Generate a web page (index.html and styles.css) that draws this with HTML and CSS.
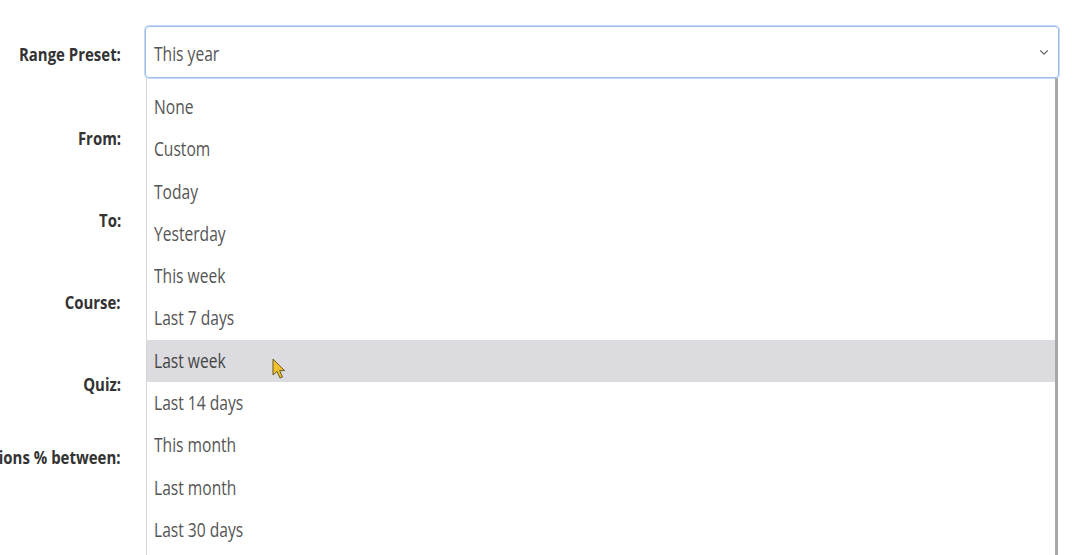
FILE: index.html
```html
<!DOCTYPE html>
<html>
<head>
<meta charset="utf-8">
<link rel="stylesheet" href="styles.css">
</head>
<body>
<div class="form">
  <div class="labels">
    <div class="label l-range"><span class="lt">Range Preset:</span></div>
    <div class="label l-from"><span class="lt">From:</span></div>
    <div class="label"><span class="lt">To:</span></div>
    <div class="label"><span class="lt">Course:</span></div>
    <div class="label"><span class="lt">Quiz:</span></div>
    <div class="label l-last"><span class="lt">Correct questions % between:</span></div>
  </div>
  <div class="field">
    <div class="select">
      <span class="t value">This year</span>
      <svg class="chev" width="10" height="7" viewBox="0 0 10 7"><path d="M1.2 1.4 L5 5.2 L8.8 1.4" fill="none" stroke="#666" stroke-width="1.3"/></svg>
    </div>
    <div class="menu">
      <div class="opt"><span class="t">None</span></div>
      <div class="opt"><span class="t">Custom</span></div>
      <div class="opt"><span class="t">Today</span></div>
      <div class="opt"><span class="t">Yesterday</span></div>
      <div class="opt"><span class="t">This week</span></div>
      <div class="opt"><span class="t">Last 7 days</span></div>
      <div class="opt hover"><span class="t">Last week</span>
        <svg class="cursor" width="16" height="22" viewBox="0 0 16 22"><path d="M1 1 L1 17 L5 13.5 L8 20 L10.5 19 L7.6 12.6 L12.5 12.6 Z" fill="#f2c12e" stroke="#6b5a1e" stroke-width="1" stroke-linejoin="round"/></svg>
      </div>
      <div class="opt"><span class="t">Last 14 days</span></div>
      <div class="opt"><span class="t">This month</span></div>
      <div class="opt"><span class="t">Last month</span></div>
      <div class="opt"><span class="t">Last 30 days</span></div>
    </div>
  </div>
</div>
</body>
</html>
```

FILE: styles.css
```css
html, body {
  margin: 0;
  padding: 0;
  background: #fff;
  overflow: hidden;
  height: 555px;
}
body {
  font-family: "Open Sans", "Noto Sans", sans-serif;
}
.form {
  display: grid;
  grid-template-columns: 121px 1fr;
  column-gap: 24px;
  padding: 26px 27px 0 0;
}
.labels {
  display: flex;
  flex-direction: column;
}
.label {
  display: flex;
  justify-content: flex-end;
  white-space: nowrap;
  font-weight: 700;
  font-size: 17px;
  color: #333;
  height: 20px;
  line-height: 20px;
  margin-top: 62px;
}
.lt {
  display: inline-block;
  transform: scaleX(0.88);
  transform-origin: right center;
}
.label.l-range {
  margin-top: 19px;
}
.label.l-from {
  margin-top: 64px;
}
.label.l-last {
  margin-top: 53px;
}
.field {
  display: flex;
  flex-direction: column;
  min-width: 0;
}
.select {
  height: 52px;
  box-sizing: border-box;
  border: 1px solid #9dbdec;
  box-shadow: 0 0 0 1px #c6d9f5;
  border-radius: 4px;
  display: flex;
  align-items: center;
  justify-content: space-between;
  padding: 0 9px 0 8px;
  font-size: 20px;
  color: #555;
}
.t {
  display: inline-block;
  transform: scaleX(0.78);
  transform-origin: left center;
}
.value {
  margin-top: 3px;
}
.menu {
  margin-left: 1px;
  margin-right: 1px;
  border-left: 1px solid #d6d6d6;
  border-right: 3px solid #a8a8a8;
  padding-top: 8px;
  height: 480px;
  box-sizing: border-box;
}
.opt {
  height: 42.3px;
  line-height: 42px;
  padding-left: 7px;
  font-size: 20px;
  color: #555;
  white-space: nowrap;
  position: relative;
}
.opt.hover {
  background: #dcdce0;
  color: #444;
}
.cursor {
  position: absolute;
  left: 125px;
  top: 18px;
}
```
